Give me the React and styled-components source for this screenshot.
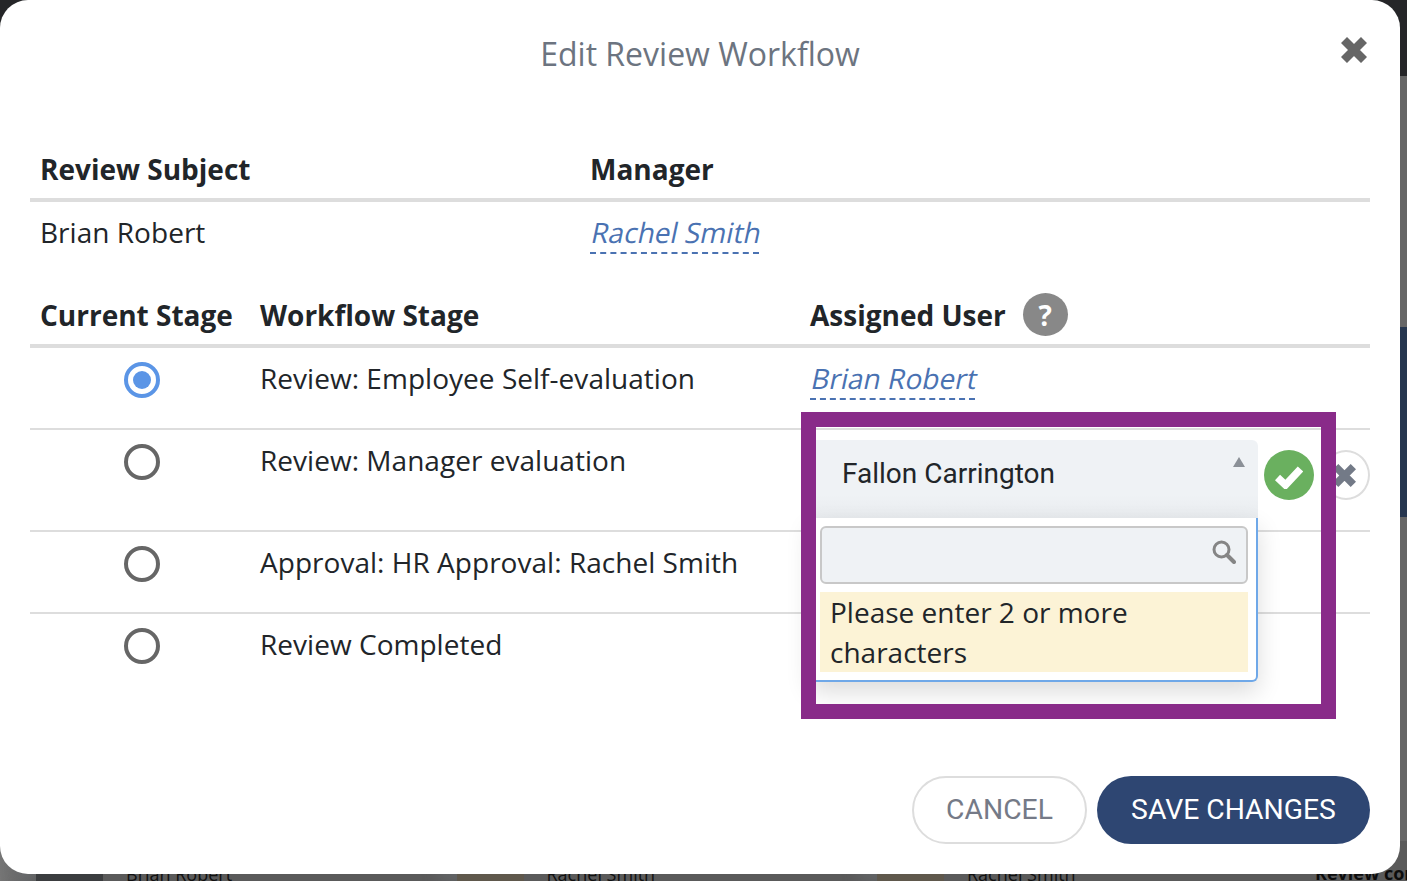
import styled, { createGlobalStyle } from "styled-components";

const stages = [
  { id: 1, name: "Review: Employee Self-evaluation", current: true },
  { id: 2, name: "Review: Manager evaluation", tall: true },
  { id: 3, name: "Approval: HR Approval: Rachel Smith" },
  { id: 4, name: "Review Completed", last: true },
];

const behind = [
  { name: "Brian Robert", tint: "#3b3d3f" },
  { name: "Rachel Smith", tint: "#5f584c" },
  { name: "Rachel Smith", tint: "#5f584c" },
];

const XMark = ({ size }) => (
  <svg width={size} height={size} viewBox="0 0 26 26" fill="none">
    <path d="M3 3L23 23M23 3L3 23" stroke="currentColor" strokeWidth="8.5" />
  </svg>
);

const App = () => {
  return (
    <Page>
      <GlobalStyle />
      <Backdrop>
        <TopBar />
        <SideTab />
        <BackRow>
          {behind.map((item, i) => (
            <BackCell key={i}>
              <Thumb $tint={item.tint} />
              {item.name}
            </BackCell>
          ))}
          <BackHeading>Review complete</BackHeading>
        </BackRow>
      </Backdrop>

      <Modal>
        <Title>Edit Review Workflow</Title>
        <CloseIcon>
          <XMark size={26} />
        </CloseIcon>

        <SubjectHead>
          <HeadCell>Review Subject</HeadCell>
          <HeadCell>Manager</HeadCell>
        </SubjectHead>
        <SubjectRow>
          <PlainCell>Brian Robert</PlainCell>
          <PlainCell>
            <EditLink>
              <Slanted>Rachel Smith</Slanted>
            </EditLink>
          </PlainCell>
        </SubjectRow>

        <StageHead>
          <HeadCell>Current Stage</HeadCell>
          <HeadCell>Workflow Stage</HeadCell>
          <HeadCell>
            Assigned User
            <HelpBadge>?</HelpBadge>
          </HeadCell>
        </StageHead>

        {stages.map((stage) => (
          <StageRow key={stage.id} $tall={stage.tall} $last={stage.last}>
            <RadioCell>
              <Radio $checked={stage.current} />
            </RadioCell>
            <PlainCell>{stage.name}</PlainCell>
            {stage.current && (
              <PlainCell>
                <EditLink>
                  <Slanted>Brian Robert</Slanted>
                </EditLink>
              </PlainCell>
            )}
            {stage.tall && (
              <EditCell>
                <SelectWrap>
                  <SelectBox>
                    Fallon Carrington
                    <Caret />
                  </SelectBox>
                  <Dropdown>
                    <SearchBox>
                      <svg width="24" height="24" viewBox="0 0 24 24" fill="none">
                        <circle cx="9.5" cy="9.5" r="7.5" stroke="#858585" strokeWidth="3" />
                        <path d="M15 15L22 22" stroke="#858585" strokeWidth="4" strokeLinecap="round" />
                      </svg>
                    </SearchBox>
                    <Notice>Please enter 2 or more characters</Notice>
                  </Dropdown>
                </SelectWrap>
                <ConfirmButton>
                  <svg width="28" height="24" viewBox="0 0 28 24" fill="none">
                    <path d="M2.5 12.5L10.5 20L25.5 4" stroke="currentColor" strokeWidth="7.5" />
                  </svg>
                </ConfirmButton>
                <DismissButton>
                  <XMark size={23} />
                </DismissButton>
              </EditCell>
            )}
          </StageRow>
        ))}

        <Footer>
          <CancelButton>CANCEL</CancelButton>
          <SaveButton>SAVE CHANGES</SaveButton>
        </Footer>

        <Highlight />
      </Modal>
    </Page>
  );
};

const GlobalStyle = createGlobalStyle`
  html, body {
    margin: 0;
    padding: 0;
  }
  body {
    font-family: "Open Sans", "Liberation Sans", sans-serif;
    color: #212529;
  }
`;

const Page = styled.div`
  position: relative;
  width: 1407px;
  height: 881px;
  overflow: hidden;
  background: #666666;
`;

const Backdrop = styled.div`
  display: flex;
  flex-direction: column;
  height: 100%;
`;

const TopBar = styled.div`
  height: 76px;
  flex-shrink: 0;
  background: #252628;
`;

const SideTab = styled.div`
  align-self: flex-end;
  width: 7px;
  height: 190px;
  margin-top: 251px;
  background: #26364f;
`;

const BackRow = styled.div`
  display: flex;
  align-items: flex-end;
  height: 40px;
  margin-top: auto;
  padding: 0 0 0 36px;
  background: linear-gradient(90deg, #767676, #5a5a5a 36px);
`;

const BackCell = styled.div`
  display: flex;
  align-items: flex-end;
  gap: 23px;
  width: 420.5px;
  height: 100%;
  font-size: 18px;
  line-height: 14px;
  color: #111111;
`;

const Thumb = styled.div`
  width: 67px;
  height: 100%;
  background: ${(p) => p.$tint};
  box-shadow: -18px 0 16px rgba(120, 126, 132, 0.35);
`;

const BackHeading = styled.div`
  position: absolute;
  left: 1315px;
  bottom: -4px;
  font-size: 18px;
  font-weight: 700;
  white-space: nowrap;
  color: #0c0c0c;
`;

const Modal = styled.div`
  position: absolute;
  top: 0;
  left: 0;
  box-sizing: border-box;
  width: 1400px;
  height: 874px;
  padding: 0 30px;
  background: #ffffff;
  border-radius: 28px;
`;

const Title = styled.div`
  height: 140px;
  padding-top: 32px;
  box-sizing: border-box;
  font-size: 32px;
  line-height: 44px;
  text-align: center;
  color: #6c7480;
`;

const CloseIcon = styled.div`
  position: absolute;
  top: 37px;
  right: 33px;
  display: flex;
  color: #666666;
`;

const SubjectHead = styled.div`
  display: grid;
  grid-template-columns: 550px 1fr;
  height: 58px;
  border-bottom: 4px solid #dddddd;
`;

const HeadCell = styled.div`
  display: flex;
  align-items: center;
  padding: 0 10px;
  font-size: 28px;
  font-weight: 700;
  color: #212529;
`;

const SubjectRow = styled.div`
  display: grid;
  grid-template-columns: 550px 1fr;
  height: 85px;
`;

const PlainCell = styled.div`
  padding: 10px 10px 0;
  font-size: 28px;
  line-height: 40px;
  letter-spacing: 0.03px;
  color: #212529;
`;

const EditLink = styled.span`
  display: inline-block;
  height: 40px;
  line-height: 40px;
  color: #4a72b2;
  border-bottom: 2px dashed #4a72b2;
`;

const Slanted = styled.span`
  display: inline-block;
  transform: skewX(-12deg);
  transform-origin: 0 75%;
`;

const StageHead = styled.div`
  display: grid;
  grid-template-columns: 220px 550px 1fr;
  height: 55px;
  padding-bottom: 2px;
  border-bottom: 4px solid #dddddd;
`;

const HelpBadge = styled.span`
  display: flex;
  align-items: center;
  justify-content: center;
  width: 45px;
  height: 43px;
  margin-left: 17px;
  border-radius: 50%;
  background: #888888;
  color: #ffffff;
  font-size: 28px;
`;

const StageRow = styled.div`
  display: grid;
  grid-template-columns: 220px 550px 1fr;
  box-sizing: border-box;
  height: ${(p) => (p.$tall ? "102px" : "82px")};
  border-bottom: ${(p) => (p.$last ? "none" : "2px solid #dddddd")};
`;

const RadioCell = styled.div`
  display: flex;
  justify-content: center;
  padding: 14px 0 0 4px;
`;

const Radio = styled.span`
  display: flex;
  align-items: center;
  justify-content: center;
  box-sizing: border-box;
  width: 36px;
  height: 36px;
  border-radius: 50%;
  border: 4px solid ${(p) => (p.$checked ? "#5b95e6" : "#666666")};
  &::after {
    content: "";
    display: ${(p) => (p.$checked ? "block" : "none")};
    width: 18px;
    height: 18px;
    border-radius: 50%;
    background: #5b95e6;
  }
`;

const EditCell = styled.div`
  display: flex;
  align-items: flex-start;
  padding: 10px 0 0 10px;
`;

const SelectWrap = styled.div`
  position: relative;
  width: 448px;
`;

const SelectBox = styled.div`
  position: relative;
  box-sizing: border-box;
  height: 78px;
  padding: 14px 32px 0;
  border-radius: 6px 6px 0 0;
  background: linear-gradient(#eff2f5 70%, #e9ecef);
  font-family: Roboto, "Liberation Sans", sans-serif;
  font-size: 28px;
  line-height: 40px;
  color: #212529;
`;

const Caret = styled.span`
  position: absolute;
  top: 17px;
  right: 13px;
  border-left: 6px solid transparent;
  border-right: 6px solid transparent;
  border-bottom: 10px solid #8b9097;
`;

const Dropdown = styled.div`
  position: absolute;
  top: 100%;
  left: 0;
  right: 0;
  z-index: 2;
  box-sizing: border-box;
  padding: 8px;
  background: #ffffff;
  border: 2px solid #6fa8e8;
  border-top: none;
  border-radius: 0 0 6px 6px;
  box-shadow: 0 10px 24px rgba(0, 0, 0, 0.14);
`;

const SearchBox = styled.div`
  display: flex;
  align-items: flex-start;
  justify-content: flex-end;
  box-sizing: border-box;
  height: 58px;
  padding: 12px 10px 0 0;
  border: 2px solid #c8c8c8;
  border-radius: 6px;
  background: #eff2f5;
`;

const Notice = styled.div`
  margin-top: 8px;
  padding: 0 10px;
  background: #fcf3d6;
  font-size: 28px;
  line-height: 40px;
  color: #212529;
`;

const ConfirmButton = styled.span`
  display: flex;
  align-items: center;
  justify-content: center;
  flex-shrink: 0;
  box-sizing: border-box;
  width: 50px;
  height: 50px;
  margin: 10px 0 0 6px;
  padding-top: 4px;
  border-radius: 50%;
  background: #6ab05f;
  color: #ffffff;
`;

const DismissButton = styled.span`
  display: flex;
  align-items: center;
  justify-content: center;
  flex-shrink: 0;
  box-sizing: border-box;
  width: 48px;
  height: 50px;
  margin: 10px 0 0 8px;
  padding-right: 3px;
  border: 2px solid #dddddd;
  border-radius: 50%;
  color: #737a87;
`;

const Footer = styled.div`
  display: flex;
  justify-content: flex-end;
  gap: 10px;
  margin-top: 80px;
`;

const PillButton = styled.button`
  box-sizing: border-box;
  height: 68px;
  padding: 0 0 2px;
  border-radius: 34px;
  font-family: Roboto, "Liberation Sans", sans-serif;
  font-size: 28.3px;
  cursor: pointer;
`;

const CancelButton = styled(PillButton)`
  width: 175px;
  background: #ffffff;
  border: 2px solid #dddddd;
  color: #757a87;
`;

const SaveButton = styled(PillButton)`
  width: 273px;
  background: #2e4672;
  border: none;
  color: #ffffff;
`;

const Highlight = styled.div`
  position: absolute;
  top: 412px;
  left: 801px;
  z-index: 3;
  box-sizing: border-box;
  width: 535px;
  height: 307px;
  border: 15px solid #892b89;
  pointer-events: none;
`;

export default App;
